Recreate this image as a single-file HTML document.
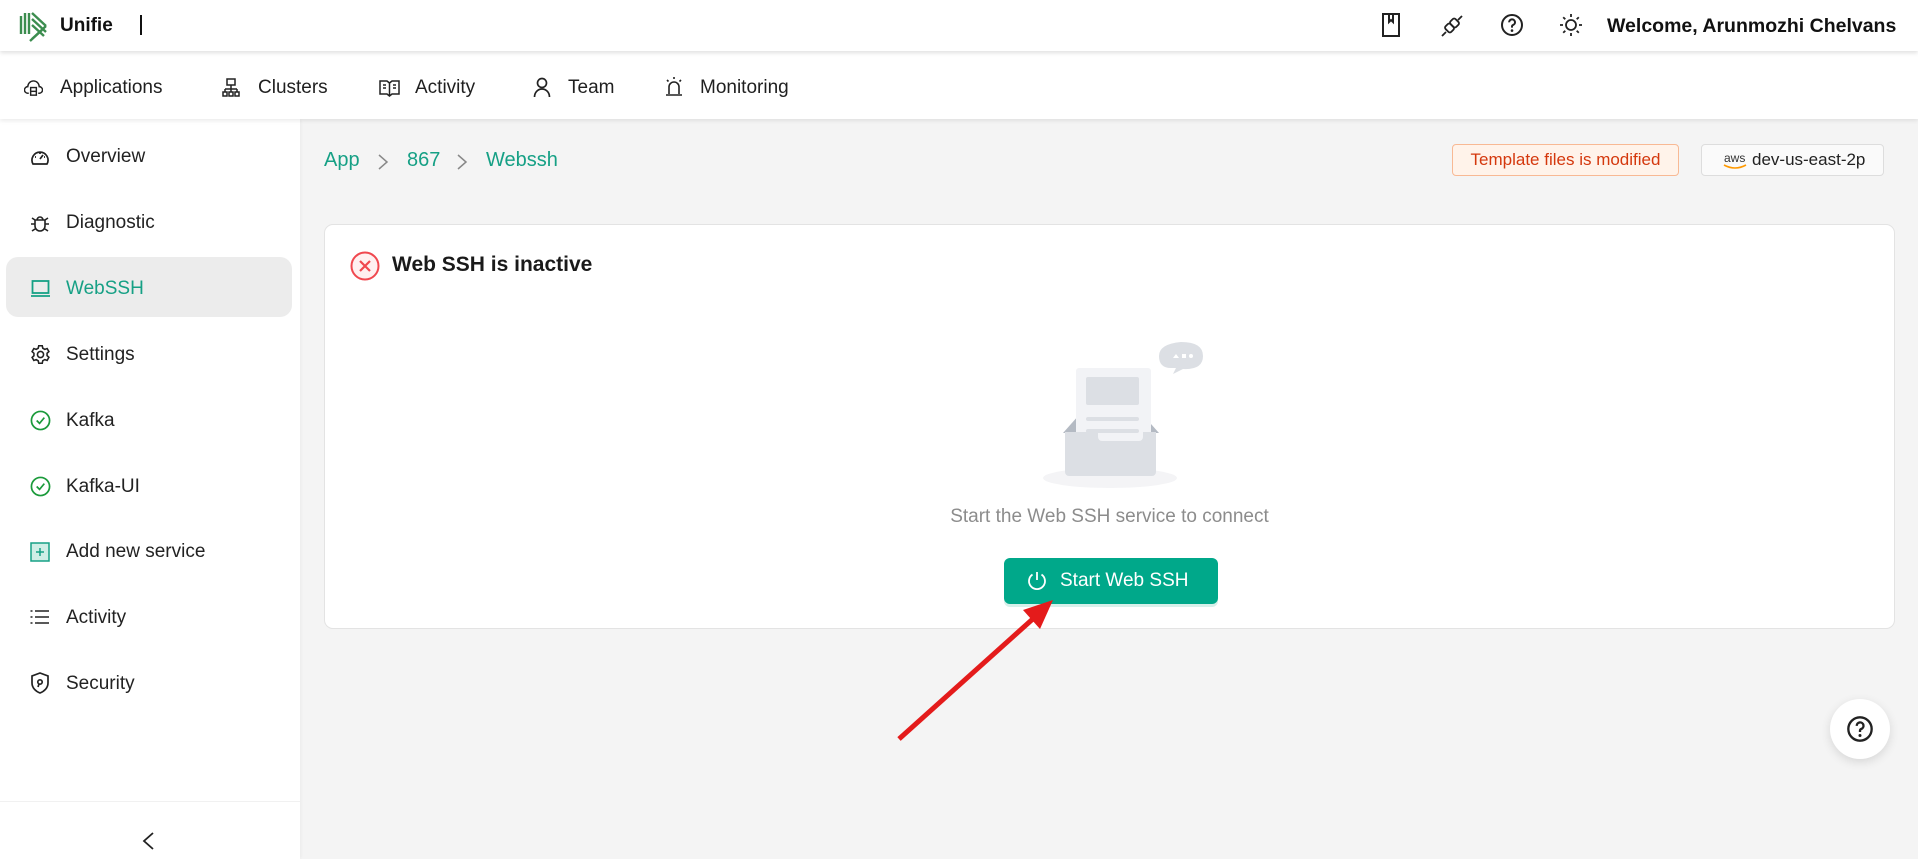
<!DOCTYPE html>
<html><head><meta charset="utf-8"><style>
*{box-sizing:border-box;margin:0;padding:0}
body{width:1918px;height:859px;overflow:hidden;background:#f4f4f4;font-family:"Liberation Sans",sans-serif;color:#1f1f1f;position:relative}
.top{position:absolute;left:0;top:0;width:1918px;height:51px;background:#fff;box-shadow:0 2px 4px rgba(0,0,0,.12);z-index:3}
.nav{position:absolute;left:0;top:51px;width:1918px;height:68px;background:#fff;box-shadow:0 2px 4px rgba(0,0,0,.08);z-index:2}
.abs{position:absolute;white-space:nowrap}
.navi{position:absolute;top:77px;font-size:19px;line-height:22px;color:#1f1f1f;white-space:nowrap}
.side{position:absolute;left:0;top:119px;width:300px;height:740px;background:#fff;box-shadow:1px 0 3px rgba(0,0,0,.04)}
.si{position:absolute;left:66px;font-size:19px;line-height:22px;color:#222;white-space:nowrap}
.ic{position:absolute;left:30px}
.card{position:absolute;left:324px;top:224px;width:1571px;height:405px;background:#fff;border:1px solid #e3e3e3;border-radius:9px}
</style></head><body>
<div class="top">
<svg class="abs" style="left:18px;top:10px" width="31" height="32" viewBox="0 0 31 32"><g fill="none" stroke="#3c8d4f" stroke-width="2.4"><path d="M3 6v18M7 3v21M11 3v21"/><path d="M14 3l14 13M14 9l14 13M14 15l12 11"/><path d="M28 16L14 29M24 20L12 31"/></g></svg>
<div class="abs" style="left:60px;top:15px;font-size:19px;font-weight:bold;color:#111">Unifie</div>
<div class="abs" style="left:140px;top:15px;width:1.5px;height:20px;background:#111"></div>
<svg class="abs" style="left:1381px;top:13px" width="20" height="24" viewBox="0 0 20 24"><g fill="none" stroke="#222" stroke-width="2"><rect x="2" y="1" width="16" height="22"/><path d="M8 1v8l2-2 2 2V1"/></g></svg>
<svg class="abs" style="left:1440px;top:14px" width="24" height="24" viewBox="0 0 24 24"><g fill="none" stroke="#222" stroke-width="1.8"><path d="M2 22l4-4M18 6l4-4"/><rect x="6" y="10" width="7" height="8" rx="2" transform="rotate(-45 9.5 14)"/><rect x="11" y="5" width="7" height="8" rx="2" transform="rotate(-45 14.5 9)"/></g></svg>
<svg class="abs" style="left:1500px;top:13px" width="24" height="24" viewBox="0 0 24 24"><g fill="none" stroke="#222" stroke-width="2"><circle cx="12" cy="12" r="10"/><path d="M9.2 9.3a2.9 2.9 0 1 1 3.8 2.7c-.7.3-1 .9-1 1.6v1"/></g><circle cx="12" cy="17.6" r="1.3" fill="#222"/></svg>
<svg class="abs" style="left:1559px;top:13px" width="24" height="24" viewBox="0 0 24 24"><g fill="none" stroke="#222" stroke-width="1.8"><circle cx="12" cy="12" r="5"/><path d="M12 1v3M12 20v3M1 12h3M20 12h3M4.2 4.2l2.1 2.1M17.7 17.7l2.1 2.1M4.2 19.8l2.1-2.1M17.7 6.3l2.1-2.1"/></g></svg>
<div class="abs" style="left:1607px;top:15px;font-size:19.5px;font-weight:bold;color:#111">Welcome, Arunmozhi Chelvans</div>
</div>
<div class="nav"></div>
<div style="position:absolute;z-index:4">
<svg class="abs" style="left:24px;top:79px" width="19" height="19" viewBox="0 0 20 20"><g fill="none" stroke="#222" stroke-width="1.5"><path d="M5 15H4a3.5 3.5 0 0 1 0-7 6 6 0 0 1 12 0 3.5 3.5 0 0 1 0 7h-1"/><rect x="7" y="9" width="6" height="8"/><path d="M7 13h6"/></g></svg>
<div class="navi" style="left:60px">Applications</div>
<svg class="abs" style="left:222px;top:78px" width="18" height="20" viewBox="0 0 18 20"><g fill="none" stroke="#222" stroke-width="1.5"><rect x="5" y="1" width="8" height="6"/><path d="M9 7v4M3 11h12M3 11v3M9 11v3M15 11v3"/><rect x="1" y="14" width="4" height="4"/><rect x="7" y="14" width="4" height="4"/><rect x="13" y="14" width="4" height="4"/></g></svg>
<div class="navi" style="left:258px">Clusters</div>
<svg class="abs" style="left:379px;top:79px" width="21" height="18" viewBox="0 0 21 18"><g fill="none" stroke="#222" stroke-width="1.5"><path d="M1 2h7l2.5 2L13 2h7v13h-7l-2.5 2L8 15H1z"/><path d="M10.5 4v12M4 6h3M4 9h3M14 6h3M14 9h3"/></g></svg>
<div class="navi" style="left:415px">Activity</div>
<svg class="abs" style="left:533px;top:77px" width="18" height="21" viewBox="0 0 18 21"><g fill="none" stroke="#222" stroke-width="1.7"><circle cx="9" cy="6" r="4.5"/><path d="M1.5 20c0-4.5 3.3-8 7.5-8s7.5 3.5 7.5 8"/></g></svg>
<div class="navi" style="left:568px">Team</div>
<svg class="abs" style="left:664px;top:76px" width="20" height="22" viewBox="0 0 20 22"><g fill="none" stroke="#222" stroke-width="1.6"><path d="M5 18v-7a5 5 0 0 1 10 0v7M2 19h16M10 1v2M3 4l1.5 1.5M17 4l-1.5 1.5"/></g></svg>
<div class="navi" style="left:700px">Monitoring</div>
</div>

<div class="side">
<div class="abs" style="left:6px;top:138px;width:286px;height:60px;background:#ececec;border-radius:12px"></div>
<div class="abs" style="left:0;top:682px;width:300px;height:1px;background:#f1f1f1"></div>
<svg class="abs" style="left:141px;top:713px" width="14" height="18" viewBox="0 0 14 18"><path d="M12 1L3 9l9 8" fill="none" stroke="#222" stroke-width="1.8"/></svg>
</div>
<div style="position:absolute;left:0;top:0;width:300px;z-index:1">
<svg class="ic" style="top:148px" width="20" height="18" viewBox="0 0 20 18"><g fill="none" stroke="#222" stroke-width="1.7"><path d="M3 16a8 8 0 1 1 14 0z"/><path d="M10 11l3-4M5 9h1M14 9h1M10 5v1"/></g></svg>
<div class="si" style="top:146px">Overview</div>
<svg class="ic" style="top:212px" width="20" height="22" viewBox="0 0 20 22"><g fill="none" stroke="#222" stroke-width="1.6"><path d="M5 8h10v6a5 5 0 0 1-10 0zM7 8a3 3 0 0 1 6 0M1 12h4M15 12h4M2 6l3 2M18 6l-3 2M2 19l3-2M18 19l-3-2"/></g></svg>
<div class="si" style="top:212px">Diagnostic</div>
<svg class="ic" style="top:280px" width="21" height="18" viewBox="0 0 21 18"><g fill="none" stroke="#16a085" stroke-width="1.8"><rect x="2.5" y="1" width="16" height="12"/><path d="M1 16h19"/></g></svg>
<div class="si" style="top:278px;color:#16a085">WebSSH</div>
<svg class="ic" style="top:344px" width="21" height="21" viewBox="0 0 24 24"><g fill="none" stroke="#222" stroke-width="1.8"><circle cx="12" cy="12" r="3.5"/><path d="M10 2h4l.6 2.8 2.3 1.3 2.7-.9 2 3.5-2.1 1.9v2.7l2.1 1.9-2 3.5-2.7-.9-2.3 1.3L14 22h-4l-.6-2.8-2.3-1.3-2.7.9-2-3.5 2.1-1.9v-2.7L2.4 8.7l2-3.5 2.7.9 2.3-1.3z"/></g></svg>
<div class="si" style="top:344px">Settings</div>
<svg class="ic" style="top:410px" width="21" height="21" viewBox="0 0 22 22"><g fill="none" stroke="#1a9a3a" stroke-width="1.8"><circle cx="11" cy="11" r="9.5"/><path d="M7 11l3 3 5-6"/></g></svg>
<div class="si" style="top:410px">Kafka</div>
<svg class="ic" style="top:476px" width="21" height="21" viewBox="0 0 22 22"><g fill="none" stroke="#1a9a3a" stroke-width="1.8"><circle cx="11" cy="11" r="9.5"/><path d="M7 11l3 3 5-6"/></g></svg>
<div class="si" style="top:476px">Kafka-UI</div>
<svg class="ic" style="top:542px" width="20" height="20" viewBox="0 0 20 20"><rect x="1" y="1" width="18" height="18" fill="#cfeee6" stroke="#16a085" stroke-width="1.5"/><path d="M10 6v8M6 10h8" stroke="#16a085" stroke-width="1.5"/></svg>
<div class="si" style="top:541px">Add new service</div>
<svg class="ic" style="top:609px" width="19" height="16" viewBox="0 0 19 16"><g stroke="#222" stroke-width="1.6"><path d="M5 2h14M5 8h14M5 14h14M0.5 2h2M0.5 8h2M0.5 14h2"/></g></svg>
<div class="si" style="top:607px">Activity</div>
<svg class="ic" style="top:672px" width="20" height="22" viewBox="0 0 20 22"><g fill="none" stroke="#222" stroke-width="1.7"><path d="M10 1l8 3v7c0 5-4 8.5-8 10-4-1.5-8-5-8-10V4z"/><circle cx="10" cy="10" r="2.2"/><path d="M9 12l-1 3"/></g></svg>
<div class="si" style="top:673px">Security</div>
</div>

<div class="abs" style="left:324px;top:149px;font-size:20px;color:#16a085">App</div>
<svg class="abs" style="left:377px;top:153px" width="12" height="18" viewBox="0 0 12 18"><path d="M2 2l8 7-8 7" fill="none" stroke="#888" stroke-width="1.5"/></svg>
<div class="abs" style="left:407px;top:149px;font-size:20px;color:#16a085">867</div>
<svg class="abs" style="left:456px;top:153px" width="12" height="18" viewBox="0 0 12 18"><path d="M2 2l8 7-8 7" fill="none" stroke="#888" stroke-width="1.5"/></svg>
<div class="abs" style="left:486px;top:149px;font-size:20px;color:#16a085">Webssh</div>

<div class="abs" style="left:1452px;top:144px;width:227px;height:32px;border:1px solid #f8b994;background:#fff3ea;border-radius:4px;font-size:17px;line-height:30px;text-align:center;color:#d4380d">Template files is modified</div>
<div class="abs" style="left:1701px;top:144px;width:183px;height:32px;border:1px solid #ddd;background:#fafafa;border-radius:4px;font-size:17px;line-height:30px;color:#222">
<span style="position:absolute;left:22px;top:-2px;font-size:12px;color:#333">aws</span>
<svg class="abs" style="left:21px;top:19px" width="24" height="6" viewBox="0 0 24 6"><path d="M1 1q11 6 22 0" fill="none" stroke="#f90" stroke-width="1.6"/></svg>
<span style="position:absolute;left:50px;top:0">dev-us-east-2p</span></div>

<div class="card">
<svg class="abs" style="left:25px;top:26px" width="30" height="30" viewBox="0 0 30 30"><circle cx="15" cy="15" r="13.5" fill="#fff0f0" stroke="#f0484f" stroke-width="2"/><path d="M10 10l10 10M20 10l-10 10" stroke="#f0484f" stroke-width="2.2"/></svg>
<div class="abs" style="left:67px;top:28px;font-size:21px;font-weight:bold;color:#1a1a1a">Web SSH is inactive</div>
<svg class="abs" style="left:718px;top:113px" width="160" height="150" viewBox="0 0 160 150">
<ellipse cx="67" cy="140" rx="67" ry="10" fill="#f4f4f6"/>
<path d="M20 95l16-18h64l16 18z" fill="#b4bac3"/>
<rect x="33" y="30" width="75" height="85" rx="3" fill="#f2f3f6"/>
<rect x="43" y="39" width="53" height="28" rx="2" fill="#dcdfe4"/>
<rect x="43" y="79" width="53" height="4" rx="2" fill="#dcdfe4"/>
<rect x="43" y="91" width="53" height="4" rx="2" fill="#dcdfe4"/>
<path d="M22 94h33v5a4 4 0 0 0 4 4h37a4 4 0 0 0 4-4v-5h13v40a4 4 0 0 1-4 4H26a4 4 0 0 1-4-4z" fill="#dcdfe4"/>
<path d="M128 30q-12 0-12-12t22-14q22 0 22 14t-20 13l-10 5 3-6z" fill="#dcdfe4"/>
<path d="M130 20l3-4 3 4z" fill="#fff"/><rect x="139" y="16" width="4" height="4" fill="#fff"/><circle cx="148" cy="18" r="2" fill="#fff"/>
</svg>
<div class="abs" style="left:0;top:281px;width:1569px;text-align:center;font-size:19px;color:#8c8c8c">Start the Web SSH service to connect</div>
<div class="abs" style="left:679px;top:333px;width:214px;height:46px;background:#00a88a;border-radius:6px;box-shadow:0 3px 0 #d6f0ea;color:#fff;font-size:19px;line-height:46px">
<svg class="abs" style="left:22px;top:12px" width="22" height="22" viewBox="0 0 22 22"><g fill="none" stroke="#fff" stroke-width="1.8"><path d="M6.5 4.5a8 8 0 1 0 9 0M11 2v8"/></g></svg>
<span style="position:absolute;left:56px;top:0">Start Web SSH</span></div>
</div>

<svg class="abs" style="left:0;top:0" width="1918" height="859"><line x1="899" y1="739" x2="1035" y2="617" stroke="#e41b1b" stroke-width="5"/><path d="M1053 600l-30 10 17 19z" fill="#e41b1b"/></svg>

<div class="abs" style="left:1830px;top:699px;width:60px;height:60px;border-radius:50%;background:#fff;box-shadow:0 3px 10px rgba(0,0,0,.12)">
<svg class="abs" style="left:16px;top:16px" width="28" height="28" viewBox="0 0 24 24"><g fill="none" stroke="#222" stroke-width="2"><circle cx="12" cy="12" r="10"/><path d="M9.2 9.3a2.9 2.9 0 1 1 3.8 2.7c-.7.3-1 .9-1 1.6v1"/></g><circle cx="12" cy="17.6" r="1.3" fill="#222"/></svg></div>
</body></html>
